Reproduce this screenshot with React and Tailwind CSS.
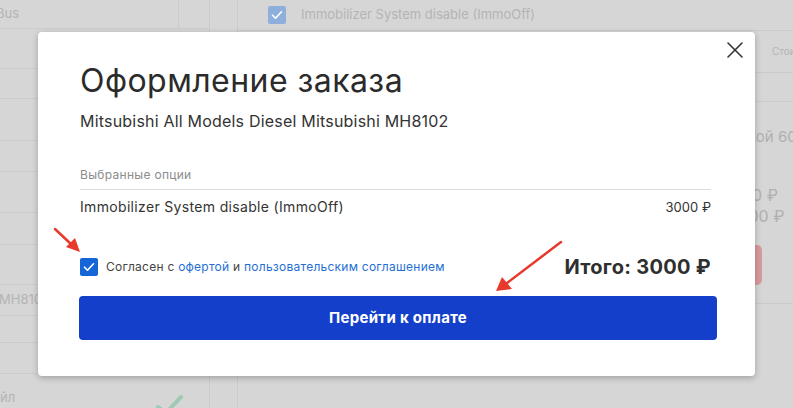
import React from 'react';
import { X } from 'lucide-react';

const leftRows = [29, 40, 30, 42, 31, 41, 32, 40, 31, 27, 31];

function Check({ className }) {
  return (
    <svg viewBox="0 0 18 18" className={className} fill="none">
      <path d="M4.5 9.2l3 3 6-6.4" stroke="#fff" strokeWidth="1.6" strokeLinecap="round" strokeLinejoin="round" />
    </svg>
  );
}

function Background() {
  return (
    <div className="flex h-full text-[#b4b4b4]">
      {/* left list */}
      <div className="w-[210px] shrink-0 flex flex-col border-r border-[#cbcbcb]">
        {leftRows.map((h, i) => (
          <div key={i} style={{ height: h }} className="shrink-0 border-b border-[#cbcbcb] flex items-center text-[13px] overflow-hidden">
            {i === 0 && <div className="w-[183px] h-full border-r border-[#cbcbcb] flex items-center ml-[-4px]">Bus</div>}
            {i === 8 && <span className="ml-[-1px] whitespace-nowrap">MH8102</span>}
          </div>
        ))}
        <div className="flex items-end justify-between pr-[26px] text-[13px]">
          <span className="ml-[-18px] mt-[14px]">Файл</span>
          <svg width="28" height="14" viewBox="0 0 28 14" className="mt-[14px]">
            <path d="M3 13l8 6M11 19L26 3" stroke="#9fc9b2" strokeWidth="4" strokeLinecap="round" fill="none" />
          </svg>
        </div>
      </div>
      <div className="w-[28px] shrink-0 border-r border-[#cbcbcb]" />
      {/* main */}
      <div className="flex-1 min-w-0 flex flex-col">
        <div className="h-[31px] shrink-0 border-b border-[#cbcbcb] flex items-center pl-[30px] gap-[15px] text-[13px]">
          <div className="w-[18px] h-[18px] rounded-[2px] bg-[#8eafdc] flex items-center justify-center">
            <Check className="w-[18px] h-[18px]" />
          </div>
          <span>Immobilizer System disable (ImmoOff)</span>
        </div>
        <div className="h-[42px] shrink-0 border-b border-[#cbcbcb] flex items-center pl-[534px] text-[10px] whitespace-nowrap overflow-hidden">Стоимость</div>
        <div className="h-[29px] shrink-0 border-b border-[#cbcbcb]" />
        <div className="pl-[451px] pt-[24px] text-[15px] text-[#b0b0b0] whitespace-nowrap overflow-hidden">Прошивкой 600 ₽</div>
        <div className="pl-[484px] pt-[36px] flex flex-col text-[16px] leading-[21px] text-[#b0b0b0] whitespace-nowrap overflow-hidden">
          <span>3000 ₽</span>
          <span>13000 ₽</span>
        </div>
        <div className="pl-[462px] pt-[18px] border-b border-[#cbcbcb] pb-[18px]">
          <div className="w-[62px] h-[40px] rounded-[5px] bg-[#d89a9c]" />
        </div>
      </div>
    </div>
  );
}

export default function App() {
  return (
    <div className="relative w-[793px] h-[408px] overflow-hidden bg-[#d6d6d6]" style={{ fontFamily: 'Inter, "Noto Sans", sans-serif' }}>
      <Background />

      <div className="absolute left-[38px] top-[32px] w-[717px] h-[344px] bg-white rounded-[4px] shadow-[0_2px_6px_rgba(0,0,0,0.25)] pl-[41px] pr-[38px] pt-[30px]">
        <button className="absolute right-[6px] top-[4px] text-[#333]">
          <X size={28} strokeWidth={1.3} />
        </button>

        <div className="pl-[1px] pr-[6px]">
          <h2 className="text-[32px] leading-[38px] text-[#2b2b2b] tracking-[0.45px]">Оформление заказа</h2>
          <p className="mt-[11px] text-[16px] leading-[20px] text-[#333] tracking-[0.2px]">Mitsubishi All Models Diesel Mitsubishi MH8102</p>

          <div className="mt-[36px] text-[12px] leading-[16px] text-[#8c8c8c] pb-[6px] border-b border-[#dcdcdc] tracking-[0.3px]">Выбранные опции</div>
          <div className="mt-[7px] flex justify-between items-center text-[14px] leading-[20px] text-[#333]">
            <span className="tracking-[0.33px]">Immobilizer System disable (ImmoOff)</span>
            <span className="text-[13px]">3000 ₽</span>
          </div>

          <div className="mt-[40px] flex justify-between items-center h-[20px]">
            <label className="flex items-center gap-[8px] text-[12px] text-[#444]">
              <span className="w-[18px] h-[18px] rounded-[2px] bg-[#1565d8] flex items-center justify-center">
                <Check className="w-[18px] h-[18px]" />
              </span>
              <span className="tracking-[0.25px]">
                Согласен с <a className="text-[#1f6fd6]">офертой</a> и <a className="text-[#1f6fd6]">пользовательским соглашением</a>
              </span>
            </label>
            <span className="text-[20px] font-bold text-[#2f2f2f] tracking-[0.3px]">Итого: 3000 ₽</span>
          </div>
        </div>

        <button className="mt-[19px] w-full h-[44px] rounded-[4px] bg-[#133fcb] text-white text-[15px] font-bold tracking-[0.3px]">
          Перейти к оплате
        </button>
      </div>

      <svg className="absolute inset-0 pointer-events-none" width="793" height="408">
        <line x1="55" y1="229" x2="72" y2="245" stroke="#e8392d" strokeWidth="2.5" strokeLinecap="round" />
        <polygon points="80,252 66,247 75,238" fill="#e8392d" />
        <line x1="561" y1="242" x2="507" y2="283" stroke="#e8392d" strokeWidth="2.5" strokeLinecap="round" />
        <polygon points="496,291 502,277 512,289" fill="#e8392d" />
      </svg>
    </div>
  );
}
